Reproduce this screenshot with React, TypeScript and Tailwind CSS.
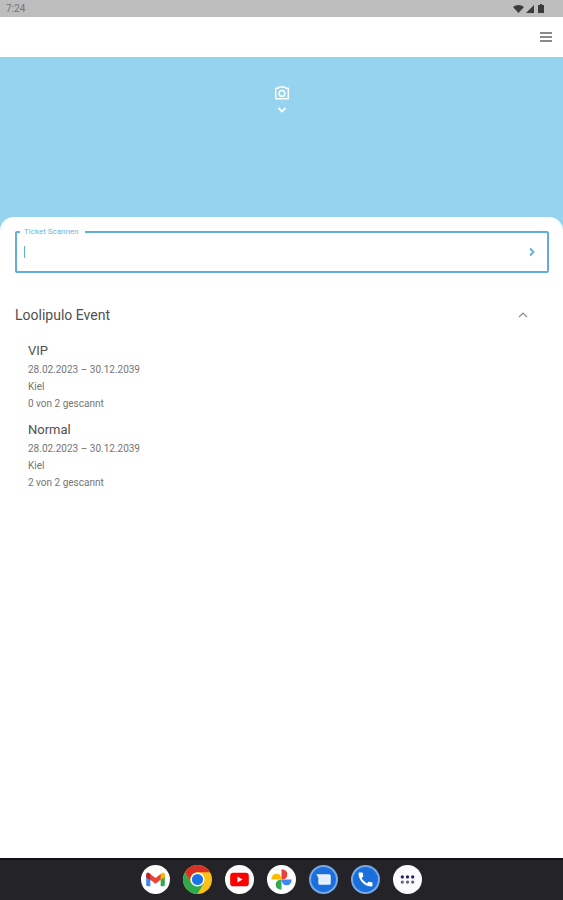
import { useState } from "react";

function StatusIcons() {
  return (
    <div className="flex items-center text-[#3c3c3c]">
      <svg className="h-2 w-[11px]" viewBox="0 0 22 16" fill="currentColor" aria-label="WLAN">
        <path d="M11 16 0 4C3 1.400 7 0 11 0s8 1.400 11 4Z" />
      </svg>
      <svg className="ml-0.5 h-2 w-2" viewBox="0 0 16 16" aria-label="Mobilfunk">
        <path d="M16 0v16H0Z" fill="currentColor" />
      </svg>
      <svg className="ml-1 h-[9px] w-1.5" viewBox="0 0 12 18" fill="currentColor" aria-label="Akku">
        <path d="M4 0h4v2h3q1 0 1 1v14q0 1-1 1H1q-1 0-1-1V3q0-1 1-1h3Z" />
      </svg>
    </div>
  );
}

function GmailIcon() {
  return (
    <svg className="h-[29px] w-[29px]" viewBox="0 0 28 28">
      <circle cx="14" cy="14" r="14" fill="#fff" />
      <path d="M5 9v10q0 1.500 1.500 1.500H9V12Z" fill="#4285f4" />
      <path d="M23 9v10q0 1.500-1.500 1.500H19V12Z" fill="#34a853" />
      <path d="M18.500 9 20.200 7.700Q23 6.500 23 9.500v2l-4.500 3.500Z" fill="#fbbc04" />
      <path d="M9.500 9 7.800 7.700Q5 6.500 5 9.500v2L9.500 15Z" fill="#c5221f" />
      <path d="M9 8.800l5 3.800 5-3.800v5.400L14 18l-5-3.800Z" fill="#ea4335" />
    </svg>
  );
}

function ChromeIcon() {
  return (
    <svg className="h-[29px] w-[29px]" viewBox="0 0 28 28">
      <circle cx="14" cy="14" r="14" fill="#fbc116" />
      <path d="M1.880 7A14 14 0 0 0 14 28l6.060-10.500H14L7.940 17.500Z" fill="#2da94f" />
      <path d="M1.880 7a14 14 0 0 1 24.240 0H14a7 7 0 0 0-6.060 10.500Z" fill="#d93025" />
      <circle cx="14" cy="14" r="6.800" fill="#fff" />
      <circle cx="14" cy="14" r="5.400" fill="#1a73e8" />
    </svg>
  );
}

function YouTubeIcon() {
  return (
    <svg className="h-[29px] w-[29px]" viewBox="0 0 28 28">
      <circle cx="14" cy="14" r="14" fill="#fff" />
      <rect x="5" y="7.500" width="18" height="13" rx="3" fill="#f00" />
      <path d="M12 11v6l5-3Z" fill="#fff" />
    </svg>
  );
}

function PhotosIcon() {
  return (
    <svg className="h-[29px] w-[29px]" viewBox="0 0 28 28">
      <circle cx="14" cy="14" r="14" fill="#fff" />
      <path d="M14 14V4.200q5.600.3 5.600 4.900T14 14Z" fill="#ea4335" />
      <path d="M14 14h9.800q-.3 5.600-4.900 5.600T14 14Z" fill="#4285f4" />
      <path d="M14 14v9.800q-5.600-.3-5.600-4.900T14 14Z" fill="#34a853" />
      <path d="M14 14H4.200q.3-5.600 4.900-5.600T14 14Z" fill="#fbbc04" />
    </svg>
  );
}

function MessagesIcon() {
  return (
    <svg className="h-[29px] w-[29px]" viewBox="0 0 28 28">
      <circle cx="14" cy="14" r="14" fill="#78a9e6" />
      <circle cx="14" cy="14" r="12" fill="#1a6fdc" />
      <path d="M7 9h12.500q1.500 0 1.500 1.500v7q0 1.500-1.500 1.500h-9Q9 19 9 17.500V12Z" fill="#e8f0fe" />
      <path d="M12 12.500h6M12 15.500h6" stroke="#d3e2fb" strokeWidth="1" />
    </svg>
  );
}

function PhoneIcon() {
  return (
    <svg className="h-[29px] w-[29px]" viewBox="0 0 28 28">
      <circle cx="14" cy="14" r="14" fill="#78a9e6" />
      <circle cx="14" cy="14" r="12" fill="#1a6fdc" />
      <path
        transform="translate(5 5) scale(.75)"
        d="M20.010 15.380c-1.230 0-2.420-.2-3.530-.56a.98.98 0 0 0-1.010.24l-1.570 1.970c-2.830-1.350-5.480-3.900-6.890-6.830l1.950-1.660c.27-.28.35-.67.24-1.020-.37-1.110-.56-2.300-.56-3.530 0-.54-.45-.99-.99-.99H4.190C3.650 3 3 3.240 3 3.990 3 13.280 10.730 21 20.010 21c.71 0 .99-.63.99-1.180v-3.450c0-.54-.45-.99-.99-.99Z"
        fill="#fff"
      />
    </svg>
  );
}

function AppsIcon() {
  return (
    <svg className="h-[29px] w-[29px]" viewBox="0 0 28 28">
      <circle cx="14" cy="14" r="14" fill="#fafaff" />
      <g fill="#24215f">
        <circle cx="9" cy="11.500" r="1.600" />
        <circle cx="14" cy="11.500" r="1.600" />
        <circle cx="19" cy="11.500" r="1.600" />
      </g>
      <g fill="#66647c">
        <circle cx="9" cy="16.500" r="1.600" />
        <circle cx="14" cy="16.500" r="1.600" />
        <circle cx="19" cy="16.500" r="1.600" />
      </g>
    </svg>
  );
}

const dockApps = [
  { name: "Gmail", Icon: GmailIcon },
  { name: "Chrome", Icon: ChromeIcon },
  { name: "YouTube", Icon: YouTubeIcon },
  { name: "Fotos", Icon: PhotosIcon },
  { name: "Messages", Icon: MessagesIcon },
  { name: "Telefon", Icon: PhoneIcon },
  { name: "Alle Apps", Icon: AppsIcon },
];

const tickets = [
  { name: "VIP", date: "28.02.2023 – 30.12.2039", place: "Kiel", scanned: "0 von 2 gescannt" },
  { name: "Normal", date: "28.02.2023 – 30.12.2039", place: "Kiel", scanned: "2 von 2 gescannt" },
];

export default function App() {
  const [open, setOpen] = useState(true);
  const [code, setCode] = useState("");

  return (
    <div className="flex min-h-screen flex-col bg-white font-[Roboto,sans-serif] text-[#505050]">
      <div className="flex h-[17px] items-center justify-between bg-[#bdbdbd] pr-[19px] pl-1.5 text-[10px] leading-4 text-[#757575]">
        <span>7:24</span>
        <StatusIcons />
      </div>

      <header className="flex h-10 items-center justify-end bg-white pr-2.5">
        <button type="button" aria-label="Menü" className="text-[#8a8a8a]">
          <svg className="h-3.5 w-3.5" viewBox="0 0 14 14" stroke="currentColor" strokeWidth="2">
            <path d="M1 3h12M1 7h12M1 11h12" />
          </svg>
        </button>
      </header>

      <section className="flex h-[174px] flex-col items-center bg-[#96d3ef] pt-7 text-white">
        <button type="button" aria-label="Kamera öffnen" className="flex flex-col items-center gap-[3px]">
          <svg className="h-4 w-4" viewBox="0 0 16 16" fill="none" stroke="currentColor" strokeWidth="1.500">
            <path d="M1.700 3.300h2.600L5.300 2h5.400l1 1.300h2.600v10.400H1.700Z" strokeLinejoin="round" />
            <circle cx="8" cy="8.400" r="2.900" />
          </svg>
          <svg className="h-3 w-3" viewBox="0 0 12 12" fill="none" stroke="currentColor" strokeWidth="1.800">
            <path d="m2.500 4 3.500 3.500L9.500 4" />
          </svg>
        </button>
      </section>

      <main className="-mt-3.5 grow rounded-t-[14px] bg-white pt-2.5 pr-3.5 pl-[15px]">
        <form onSubmit={(event) => event.preventDefault()}>
          <fieldset className="h-[46px] rounded-xs border-2 border-[#5fafd9] pr-1 pl-[3px]">
            <legend className="pr-1.5 pl-1 text-[8px] leading-[10px] text-[#6db6dc]">
              <label htmlFor="ticket">Ticket Scannen</label>
            </legend>
            <div className="flex h-[30px] items-center pr-[5px] pl-1">
              <input
                id="ticket"
                autoFocus
                value={code}
                onChange={(event) => setCode(event.target.value)}
                className="h-3 min-w-0 grow border-l border-[#5fafd9] pl-px text-xs caret-transparent outline-none"
              />
              <button type="submit" aria-label="Scannen" className="text-[#5fafd9]">
                <svg className="h-3 w-3" viewBox="0 0 12 12" fill="none" stroke="currentColor" strokeWidth="1.800">
                  <path d="m4 2.500 3.500 3.500L4 9.500" />
                </svg>
              </button>
            </div>
          </fieldset>
        </form>

        <button
          type="button"
          aria-expanded={open}
          onClick={() => setOpen(!open)}
          className="mt-8 flex w-full items-center justify-between pr-5 text-left text-sm leading-5"
        >
          <span>Loolipulo Event</span>
          <svg className="h-3 w-3" viewBox="0 0 12 12" fill="none" stroke="#8c8c8c" strokeWidth="1.200">
            <path d="m2 8 4-4 4 4" />
          </svg>
        </button>

        {open && (
          <ul className="mt-4 flex flex-col gap-2 pl-[13px]">
            {tickets.map((ticket) => (
              <li key={ticket.name} className="text-[10px] leading-[17px] text-[#757575]">
                <h2 className="text-[13px] leading-5 text-[#505050]">{ticket.name}</h2>
                <p>{ticket.date}</p>
                <p>{ticket.place}</p>
                <p>{ticket.scanned}</p>
              </li>
            ))}
          </ul>
        )}
      </main>

      <nav aria-label="Apps" className="flex h-[42px] items-center justify-center gap-[13px] border-t-2 border-[#111113] bg-[#242428] pb-0.5">
        {dockApps.map(({ name, Icon }) => (
          <button key={name} type="button" aria-label={name}>
            <Icon />
          </button>
        ))}
      </nav>
    </div>
  );
}
